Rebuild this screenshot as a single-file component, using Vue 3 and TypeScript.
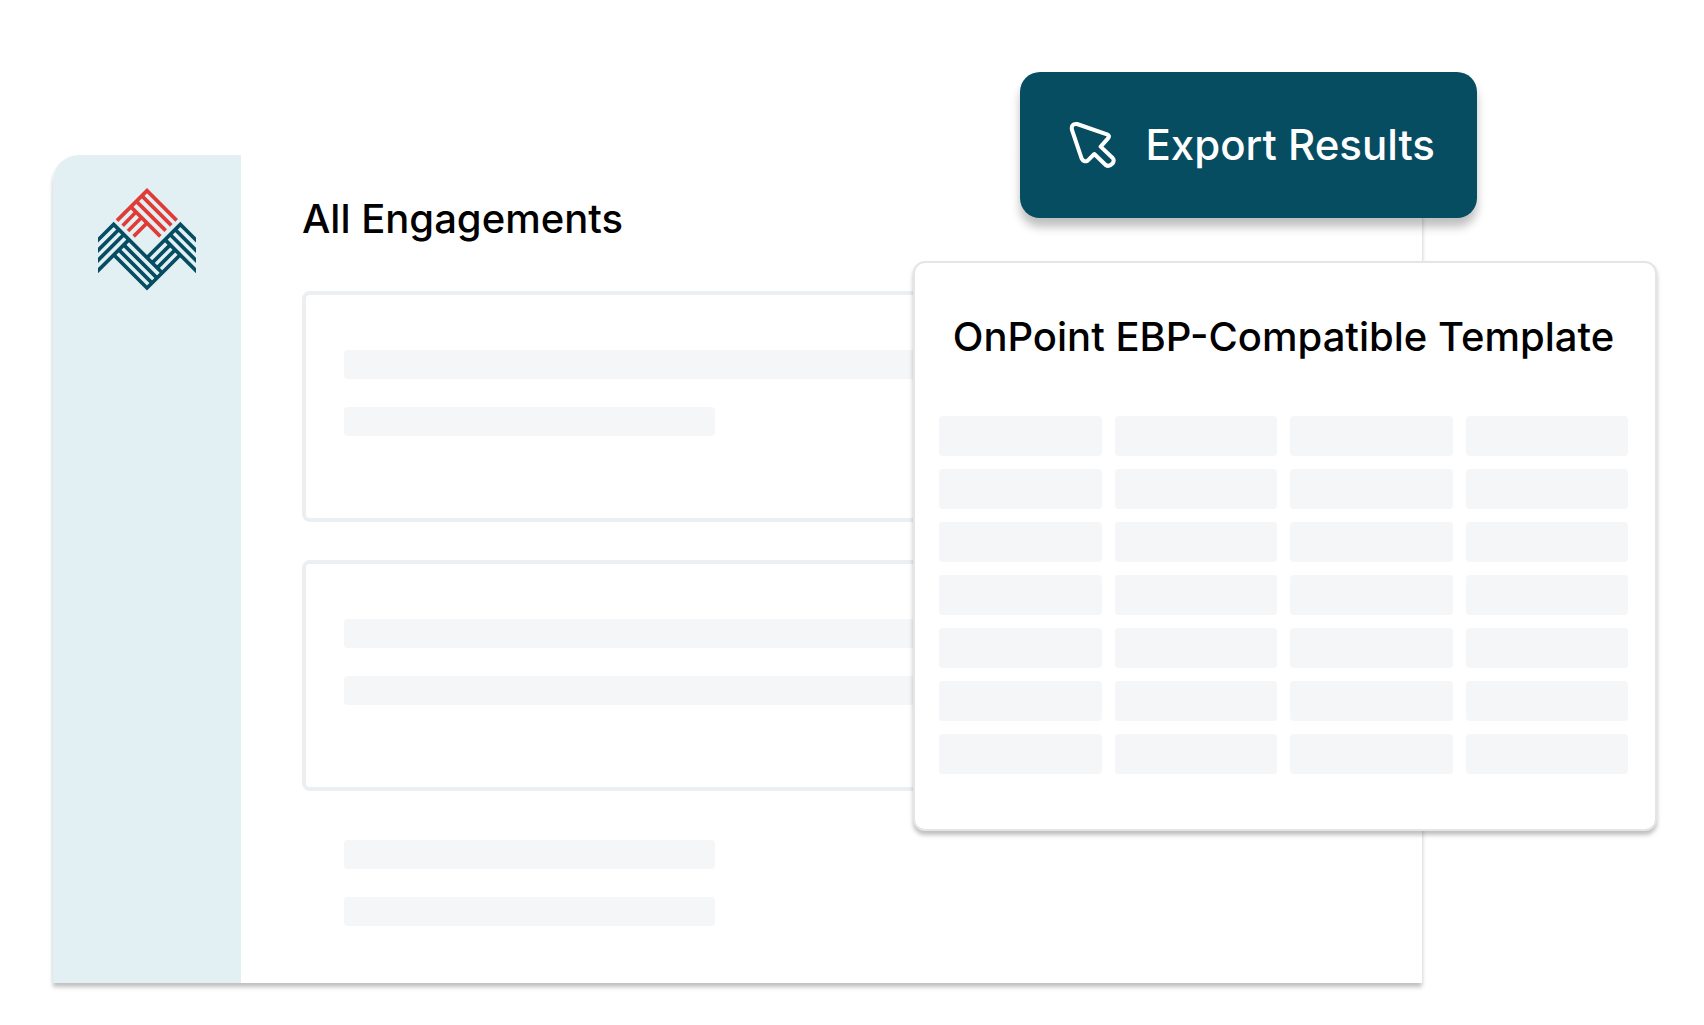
<script setup lang="ts">
interface Card {
  id: number
  bars: ('full' | 'short')[]
}

const cards: Card[] = [
  { id: 1, bars: ['full', 'short'] },
  { id: 2, bars: ['full', 'full'] },
]

const templateCells = 7 * 4
</script>

<template>
  <div class="stage">
    <div class="window">
      <aside class="sidebar">
        <svg class="logo" viewBox="39 36 294 312" role="img" aria-label="Company logo" fill="none" stroke-width="11">
          <g stroke="#e03c37" stroke-linejoin="miter">
            <path d="M96 137 186 47 275 136" />
            <path d="M170 62 259 151M153.500 78.500 242 167M137 95 226 184" />
            <path d="M153 111 113 152M169.500 127.500 129 168M186 144 146 184" />
          </g>
          <g stroke="#064d61" stroke-linejoin="miter">
            <path d="M30 204 86 148 232 294" />
            <path d="M101.500 163.500 30 235M116.500 178.500 30 265M132 194 30 296" />
            <path d="M342 204 286 148 186 248" />
            <path d="M270.500 163.500 342 235M255.500 178.500 342 265M240 194 342 296" />
            <path d="M255.500 209.500 201.500 263.500M270.500 224.500 216.500 278.500" />
            <path d="M86 239 186 339 286 239" />
            <path d="M101.500 224.500 201.500 324.500M116.500 209.500 216.500 309.500" />
          </g>
        </svg>
      </aside>
      <main class="content">
        <h1 class="heading">All Engagements</h1>
        <section v-for="card in cards" :key="card.id" class="card">
          <div v-for="(bar, i) in card.bars" :key="i" class="bar" :class="bar"></div>
        </section>
        <div class="loose">
          <div class="bar short"></div>
          <div class="bar short"></div>
        </div>
      </main>
    </div>

    <button type="button" class="export">
      <svg class="cursor" viewBox="208 198 144 144" fill="none" stroke="#fff" stroke-width="12" stroke-linejoin="round" aria-hidden="true">
        <path d="M232 207 322 238Q332 242 325 250L303 275 339 309Q345 316 339 325 328 337 318 330L284 297 264 317Q252 323 246 311L217 225Q213 205 232 207Z" />
      </svg>
      <span>Export Results</span>
    </button>

    <section class="template">
      <h2 class="heading">OnPoint EBP-Compatible Template</h2>
      <div class="cells">
        <div v-for="n in templateCells" :key="n" class="cell"></div>
      </div>
    </section>
  </div>
</template>

<style>
body {
  margin: 0;
  background: #fff;
}
</style>

<style scoped>
.stage {
  position: relative;
  box-sizing: border-box;
  min-width: 1640px;
  padding: 155px 282px 42px 53px;
  font-family: Inter, "Liberation Sans", sans-serif;
  color: #000;
}

.window {
  display: flex;
  border-radius: 26px 0 0 0;
  background: #fff;
  box-shadow: 0 4px 4px rgba(0, 0, 0, 0.25);
}

.sidebar {
  flex: none;
  display: flex;
  justify-content: center;
  align-items: flex-start;
  box-sizing: border-box;
  width: 188px;
  padding-top: 32px;
  border-radius: 26px 0 0 0;
  background: #e2f0f4;
}

.logo {
  width: 98px;
  height: 104px;
}

.content {
  flex: 1;
  display: flex;
  flex-direction: column;
  padding: 40px 61px 57px;
}

.heading {
  margin: 0;
  font-size: 40px;
  line-height: 48px;
  font-weight: 500;
  white-space: nowrap;
}

.card {
  display: flex;
  flex-direction: column;
  gap: 28px;
  margin-top: 38px;
  padding: 55px 38px 82px;
  border: 4px solid #ebeff2;
  border-radius: 8px;
}

.heading + .card {
  margin-top: 48px;
}

.loose {
  display: flex;
  flex-direction: column;
  gap: 28px;
  margin-top: 49px;
  padding: 0 42px;
}

.bar {
  height: 29px;
  border-radius: 4px;
  background: #f4f6f8;
}

.bar.short {
  width: 371px;
}

.export {
  position: absolute;
  top: 72px;
  right: 227px;
  display: flex;
  align-items: center;
  gap: 29px;
  height: 146px;
  padding: 0 42px 0 49px;
  border: 0;
  border-radius: 20px;
  background: #064d61;
  color: #fff;
  font: 500 42px/48px Inter, "Liberation Sans", sans-serif;
  white-space: nowrap;
  box-shadow: 0 9px 10px rgba(0, 0, 0, 0.25);
}

.cursor {
  width: 48px;
  height: 48px;
}

.template {
  position: absolute;
  top: 261px;
  left: 913px;
  right: 47px;
  padding: 50px 27px 55px 24px;
  border: 2px solid #e5e5e5;
  border-radius: 12px;
  background: #fff;
  box-shadow: 0 4px 4px rgba(0, 0, 0, 0.25);
}

.template .heading {
  text-align: center;
}

.cells {
  display: grid;
  grid-template-columns: repeat(4, 1fr);
  gap: 13px;
  margin-top: 55px;
}

.cell {
  height: 40px;
  border-radius: 4px;
  background: #f4f6f8;
}
</style>
